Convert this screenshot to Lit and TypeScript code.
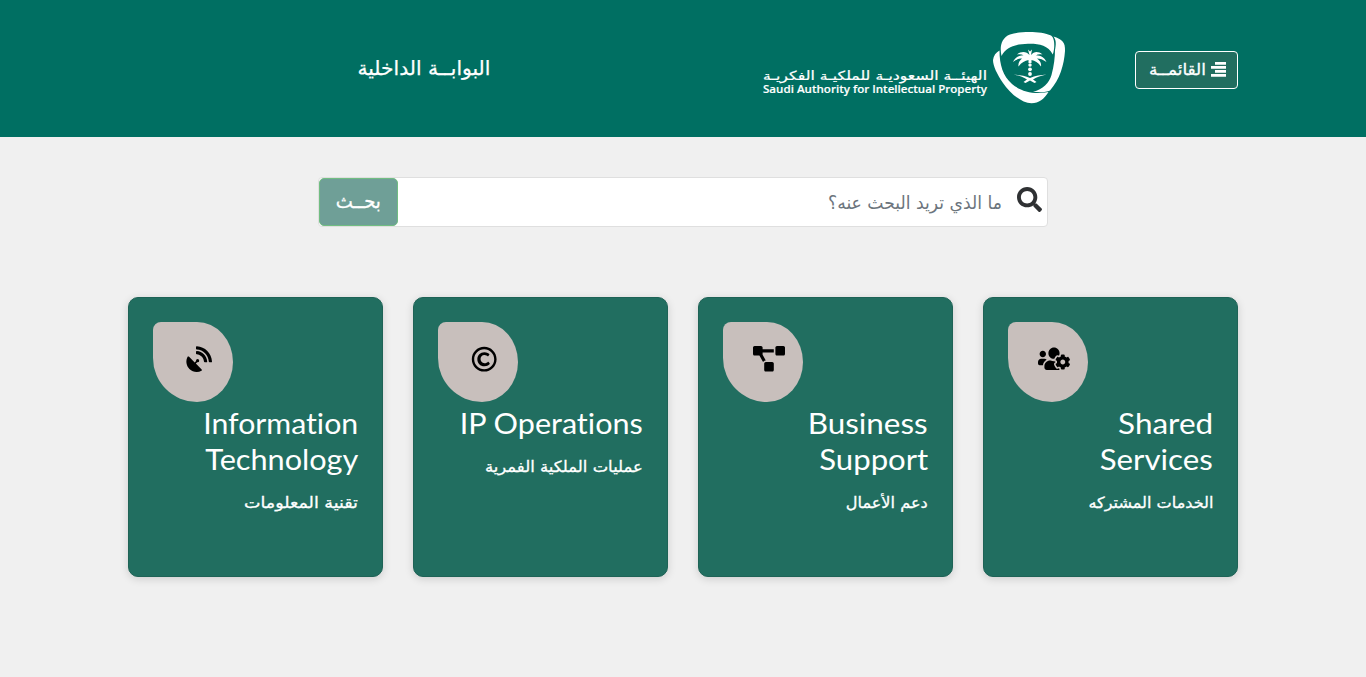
import { LitElement, html, css, svg } from "lit";
import { customElement, property } from "lit/decorators.js";

const ICONS: Record<string, { box: string; w: number; d: string }> = {
  search: {
    box: "0 0 512 512", w: 25.6,
    d: "M505 442.7L405.3 343c-4.5-4.5-10.6-7-17-7H372c27.6-35.3 44-79.7 44-128C416 93.1 322.9 0 208 0S0 93.1 0 208s93.1 208 208 208c48.3 0 92.7-16.4 128-44v16.3c0 6.4 2.5 12.5 7 17l99.7 99.7c9.4 9.4 24.6 9.4 33.9 0l28.3-28.3c9.4-9.4 9.4-24.6.1-34zM208 336c-70.7 0-128-57.2-128-128 0-70.7 57.2-128 128-128 70.7 0 128 57.2 128 128 0 70.7-57.2 128-128 128z",
  },
  diagram: {
    box: "0 0 640 512", w: 32,
    d: "M384 320H256c-17.67 0-32 14.33-32 32v128c0 17.67 14.33 32 32 32h128c17.67 0 32-14.33 32-32V352c0-17.67-14.33-32-32-32zM192 32c0-17.67-14.33-32-32-32H32C14.33 0 0 14.33 0 32v128c0 17.67 14.33 32 32 32h95.72l73.16 128.04C211.98 300.98 232.4 288 256 288h.28L192 175.51V128h224V64H192V32zM608 0H480c-17.67 0-32 14.33-32 32v128c0 17.67 14.33 32 32 32h128c17.67 0 32-14.33 32-32V32c0-17.67-14.33-32-32-32z",
  },
  dish: {
    box: "-8 -6 512 512", w: 25.6,
    d: "M305.45 462.59c7.39 7.3 6.19 20.1-3 25-77.71 41.8-176.73 29.91-242.34-35.7C-5.5 386.28-17.4 287.36 24.41 209.55c4.89-9.09 17.69-10.3 25-3L166.23 323.37l27.39-27.4c-.68-2.6-1.59-5-1.59-7.81a32 32 0 1 1 32 32c-2.8 0-5.2-.89-7.8-1.59l-27.41 27.41ZM511.98 303.07a16.1 16.1 0 0 1-16 17H463.86a15.97 15.97 0 0 1-15.89-15C440.47 175.55 336.45 70.53 207.03 63.53a15.84 15.84 0 0 1-15-15.9V16.03A16.09 16.09 0 0 1 209.03.02C372.25 8.62 503.47 139.84 511.98 303.07Zm-96.02-.3a16.21 16.21 0 0 1-16.11 17.3H367.65a16.07 16.07 0 0 1-15.9-14.7c-6.9-77.02-68.11-138.92-144.92-145.23a15.94 15.94 0 0 1-14.8-15.9V112.13a16.13 16.13 0 0 1 17.3-16.09C319.45 104.54 407.56 192.65 415.96 302.77Z",
  },
  copyright: {
    box: "-8 -8 512 512", w: 25.6,
    d: "M256 8C119.033 8 8 119.033 8 256s111.033 248 248 248 248-111.033 248-248S392.967 8 256 8zm0 448c-110.532 0-200-89.451-200-200 0-110.531 89.451-200 200-200 110.532 0 200 89.451 200 200 0 110.532-89.451 200-200 200zm107.351-101.064c-9.614 9.712-45.53 41.396-104.065 41.396-82.43 0-140.484-61.425-140.484-141.567 0-79.152 60.275-139.401 139.762-139.401 55.531 0 88.738 26.62 97.593 34.779a11.965 11.965 0 0 1 1.936 15.322l-18.155 28.113c-3.841 5.95-11.966 7.282-17.499 2.921-8.595-6.776-31.814-22.538-61.708-22.538-48.303 0-77.916 35.33-77.916 80.082 0 41.589 26.888 83.692 78.277 83.692 32.657 0 56.843-19.039 65.726-27.225 5.27-4.857 13.596-4.039 17.82 1.738l19.865 27.17a11.947 11.947 0 0 1-1.152 15.518z",
  },
  team: {
    box: "0 0 640 512", w: 32,
    d: "M610.5 341.3c2.6-14.1 2.6-28.5 0-42.6l25.8-14.9c3-1.7 4.3-5.2 3.3-8.5-6.7-21.6-18.2-41.2-33.2-57.4-2.3-2.5-6-3.1-9-1.4l-25.8 14.9c-10.9-9.3-23.4-16.5-36.9-21.3v-29.8c0-3.4-2.4-6.4-5.7-7.1-22.3-5-45-4.8-66.2 0-3.3.7-5.7 3.7-5.7 7.1v29.8c-13.5 4.8-26 12-36.9 21.3l-25.8-14.9c-2.9-1.7-6.7-1.1-9 1.4-15 16.2-26.5 35.8-33.2 57.4-1 3.3.4 6.8 3.3 8.5l25.8 14.9c-2.6 14.1-2.6 28.5 0 42.6l-25.8 14.9c-3 1.7-4.3 5.2-3.3 8.5 6.7 21.6 18.2 41.1 33.2 57.4 2.3 2.5 6 3.1 9 1.4l25.8-14.9c10.9 9.3 23.4 16.5 36.9 21.3v29.8c0 3.4 2.4 6.4 5.7 7.1 22.3 5 45 4.8 66.2 0 3.3-.7 5.7-3.7 5.7-7.1v-29.8c13.5-4.8 26-12 36.9-21.3l25.8 14.9c2.9 1.7 6.7 1.1 9-1.4 15-16.2 26.5-35.8 33.2-57.4 1-3.3-.4-6.8-3.3-8.5l-25.8-14.9zM496 368.5c-26.8 0-48.5-21.8-48.5-48.5s21.8-48.5 48.5-48.5 48.5 21.8 48.5 48.5-21.7 48.5-48.5 48.5zM96 224c35.3 0 64-28.7 64-64s-28.7-64-64-64-64 28.7-64 64 28.7 64 64 64zm224 32c1.9 0 3.7-.5 5.6-.6 8.3-21.7 20.5-42.1 36.3-59.2 7.4-8 17.9-12.6 28.9-12.6 6.9 0 13.7 1.8 19.6 5.3l7.9 4.6c.8-.5 1.6-.9 2.4-1.4 7-14.6 11.2-30.8 11.2-48 0-61.9-50.1-112-112-112S208 82.1 208 144c0 61.9 50.1 112 112 112zm105.2 194.5c-2.3-1.2-4.6-2.6-6.8-3.9-8.2 4.8-15.3 9.8-27.5 9.8-10.9 0-21.4-4.6-28.9-12.6-18.3-19.8-32.3-43.9-40.2-69.6-10.7-34.5 24.9-49.7 25.8-50.3-.1-2.6-.1-5.2 0-7.8l-7.9-4.6c-3.8-2.2-7-5-9.8-8.1-3.3.2-6.5.6-9.8.6-24.6 0-47.6-6-68.5-16h-8.3C179.6 288 128 339.6 128 403.2V432c0 26.5 21.5 48 48 48h255.4c-3.7-6-6.2-12.8-6.2-20.3v-9.2zM173.1 274.6C161.5 263.1 145.6 256 128 256H64c-35.3 0-64 28.7-64 64v32c0 17.7 14.3 32 32 32h65.9c6.3-47.4 34.9-87.3 75.2-109.4z",
  },
};

const icon = (name: string) => {
  const i = ICONS[name];
  return html`<svg viewBox=${i.box} width=${i.w} height="25.6" fill="currentColor" overflow="visible" aria-hidden="true">${svg`<path d=${i.d}></path>`}</svg>`;
};

/** One line of text condensed or widened to a set width. */
@customElement("fit-text")
class FitText extends LitElement {
  @property({ type: Number }) w = 100;
  static styles = css`
    :host { display: inline-block; white-space: nowrap; vertical-align: top; }
    .box { display: block; }
    .line { display: inline-block; transform-origin: 100% 50%; }
  `;
  firstUpdated() {
    const line = this.renderRoot.querySelector<HTMLElement>(".line")!;
    const natural = line.getBoundingClientRect().width;
    if (natural) line.style.transform = `scaleX(${this.w / natural})`;
  }
  render() {
    return html`<span class="box" style="width:${this.w}px"><span class="line"><slot></slot></span></span>`;
  }
}

interface Card { icon: string; title: [string, number][]; sub: string; subW: number; }

const CARDS: Card[] = [
  { icon: "team", title: [["Shared", 95], ["Services", 113]], sub: "الخدمات المشتركه", subW: 125 },
  { icon: "diagram", title: [["Business", 120], ["Support", 109]], sub: "دعم الأعمال", subW: 82 },
  { icon: "copyright", title: [["IP Operations", 183]], sub: "عمليات الملكية الفمرية", subW: 158 },
  { icon: "dish", title: [["Information", 155], ["Technology", 153]], sub: "تقنية المعلومات", subW: 114 },
];

@customElement("app-root")
class AppRoot extends LitElement {
  static styles = css`
    :host {
      display: block; direction: rtl; height: 677px; overflow: hidden;
      background: #f0f0f0; color: #fff;
      font-family: "DejaVu Sans", sans-serif;
    }
    * { box-sizing: border-box; }
    svg { display: block; }
    .header {
      display: flex; align-items: flex-start; height: 137px; padding: 0 128px;
      background: #006f62;
    }
    .menu {
      display: flex; align-items: flex-start; width: 103px; height: 38px; margin-top: 51px;
      padding: 10px 11px 0 0; gap: 4px; border: 1px solid #fff; border-radius: 4px;
      background: #216e60; color: #fff; font: 16px/16px "DejaVu Sans", sans-serif;
      -webkit-text-stroke: .3px;
    }
    .menu svg { flex: none; }
    .logo { margin: 28px 69px 0 0; }
    .portal { margin: 55px 272px 0 0; font-size: 20px; line-height: 26px; -webkit-text-stroke: .25px; }
    .search {
      display: flex; width: 730px; height: 50px; margin: 40px 318px 0 0;
      border: 1px solid #dfdfdf; border-radius: 4px; background: #fff;
    }
    .lens { width: 31px; padding: 9px 5px 0 0; color: #2f3133; }
    .lens svg { width: 25px; height: 25px; }
    .query { flex: 1; padding: 11px 14px 0 0; color: #6c757d; font-size: 18px; line-height: 28px; }
    .go {
      display: flex; align-items: flex-start;
      width: 79px; height: 48px; padding: 9px 16px 0 0; border: 1px solid #71bd82; border-radius: 5px;
      background: #6f9f97; color: #fff; font: 20px/26px "DejaVu Sans", sans-serif; text-align: right;
      -webkit-text-stroke: .3px;
    }
    .cards { display: grid; grid-template-columns: repeat(4, 255px); gap: 30px; margin: 70px 128px 0; }
    .card {
      height: 280px; padding: 24px; border-radius: 10px; background: #216e60;
      border: 1px solid #1e6356;
      box-shadow: 0 2px 8px rgba(0, 0, 0, .15);
    }
    .badge {
      width: 80px; height: 80px; margin-right: auto; padding: 24px 0 0 12px;
      display: flex; justify-content: center;
      border-radius: 8px 36px 36px 44px / 8px 40px 40px 44px; background: #c8bfbc; color: #000;
    }
    .title {
      display: flex; flex-direction: column; align-items: flex-start; margin: 3px 0 0;
      font: 400 29.5px/36px Lato, "Noto Sans", sans-serif; font-variant-ligatures: none;
    }
    .sub { margin: 14px 0 0; font-size: 15.5px; line-height: 24px; -webkit-text-stroke: .3px; }
  `;

  render() {
    return html`
      <header class="header">
        <button class="menu">
          <svg width="15" height="16" viewBox="0 0 15 16" fill="#fff"><path d="M4 0h11v2.700H4zM0 4h15v2.700H0zM4 8h11v2.700H4zM0 12h15v2.700H0z"/></svg>
          <fit-text w="57">القائمــة</fit-text>
        </button>
        <svg class="logo" width="304" height="80" viewBox="762 28 304 80" fill="#fff" role="img">
          <path d="M1001.500 56C999.500 47 1001 38 1010 34.500C1021 31 1041 31 1051 35.500C1055 38 1055 48 1052.800 54.500C1048 45 1038 43.500 1028 43.800C1016 44 1006 47 1001.500 56Z"/>
          <path d="M1053.500 36.500C1062 39.500 1065.500 42 1065 51C1064 65 1060 79 1050 90.500C1046 92.500 1040 92.500 1033 91.800C1043 89.500 1049 83 1051.500 75C1054 66 1055 57 1055 50C1056 45 1056.500 40 1053.500 36.500Z"/>
          <path d="M999.500 50.500C999.500 65 1003 76 1012 84C1021 91.500 1034 95 1048.500 92C1044 99 1039 103.300 1031.500 103.300C1021 103.300 1009 92 1003 83C997 74 993 66 993 60C993.500 55.500 996 52.500 999.500 50.500Z"/>
          <path d="M1029.500 55L1028 49.500L1030 51.500L1032 49.500L1031 55C1034 51.500 1038 51 1042.500 54.500C1039.500 54 1037.500 54.300 1036 55.300C1041 55.500 1044.500 57.500 1046.500 62C1043 59.500 1040 58.500 1037 58.500C1040 60.500 1041.500 63 1041 66.500C1038 62.500 1035 60.500 1031.500 60V63H1028.500V60C1025 60.500 1021.500 62.500 1018.500 66.500C1018 63 1019.500 60.500 1022 58.500C1019 58.500 1016 59.500 1013 62C1015 57.500 1018.500 55.500 1023.500 55.300C1022 54.300 1020 54 1017 54.500C1021.500 51 1026.500 51.500 1029.500 55Z"/>
          <circle cx="1030" cy="65" r="1.700"/><circle cx="1030" cy="69.300" r="1.900"/><circle cx="1030" cy="74" r="1.900"/>
          <path d="M1013.500 74.500C1019 75 1025 75.500 1030 78C1035 75.500 1041 75 1046.500 74.500C1041 75.800 1037 77 1033 79.500L1036.500 82L1034.500 83L1030 80.500L1025.500 83L1023.500 82L1027 79.500C1023 77 1019 75.800 1013.500 74.500Z"/>
          <text x="987" y="79.500" direction="rtl" font-size="12.500" stroke="#fff" stroke-width=".2" textLength="224" lengthAdjust="spacingAndGlyphs">الهيئــة السعوديـة للملكيـة الفكريـة</text>
          <text x="763" y="93" direction="ltr" font-family="Open Sans" font-weight="600" font-size="11.500" stroke="#fff" stroke-width=".15" textLength="224" lengthAdjust="spacingAndGlyphs">Saudi Authority for Intellectual Property</text>
        </svg>
        <div class="portal"><fit-text w="133">البوابــة الداخلية</fit-text></div>
      </header>
      <div class="search">
        <div class="lens">${icon("search")}</div>
        <div class="query"><fit-text w="174">ما الذي تريد البحث عنه؟</fit-text></div>
        <button class="go"><fit-text w="45">بحــث</fit-text></button>
      </div>
      <main class="cards">
        ${CARDS.map((c) => html`
          <section class="card">
            <div class="badge">${icon(c.icon)}</div>
            <h2 class="title">${c.title.map(([t, w]) => html`<fit-text w=${w}>${t}</fit-text>`)}</h2>
            <p class="sub"><fit-text w=${c.subW}>${c.sub}</fit-text></p>
          </section>`)}
      </main>`;
  }
}
